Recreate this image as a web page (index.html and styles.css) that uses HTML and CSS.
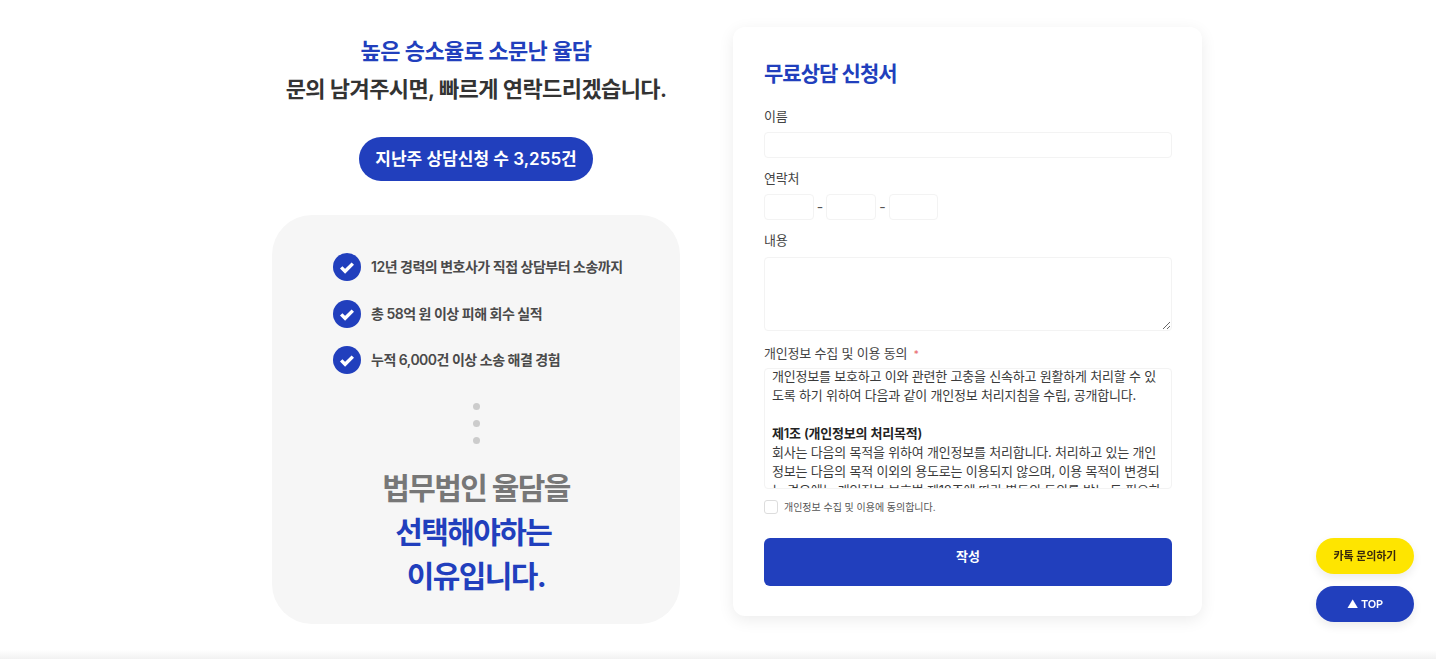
FILE: index.html
```html
<!DOCTYPE html>
<html lang="ko">
<head>
  <meta charset="UTF-8" />
  <meta name="viewport" content="width=device-width, initial-scale=1.0"/>
  <title>무료상담 신청서</title>
  <link rel="stylesheet" href="styles.css">
</head>
<body>
  <div class="container">
    <div class="intro">
      <h2 class="intro-title">높은 승소율로 소문난 율담</h2>
      <p class="intro-sub">문의 남겨주시면, 빠르게 연락드리겠습니다.</p>
      <div class="count-pill">지난주 상담신청 수 3,255건</div>

      <div class="reason-box">
        <ul class="check-list">
          <li>
            <svg class="check-icon" viewBox="0 0 28 28"><circle cx="14" cy="14" r="14" fill="#213fbd"/><path d="M8.2 14.4l3.9 3.9 7.7-7.7" fill="none" stroke="#fff" stroke-width="3.4"/></svg>
            <span>12년 경력의 변호사가 직접 상담부터 소송까지</span>
          </li>
          <li>
            <svg class="check-icon" viewBox="0 0 28 28"><circle cx="14" cy="14" r="14" fill="#213fbd"/><path d="M8.2 14.4l3.9 3.9 7.7-7.7" fill="none" stroke="#fff" stroke-width="3.4"/></svg>
            <span>총 58억 원 이상 피해 회수 실적</span>
          </li>
          <li>
            <svg class="check-icon" viewBox="0 0 28 28"><circle cx="14" cy="14" r="14" fill="#213fbd"/><path d="M8.2 14.4l3.9 3.9 7.7-7.7" fill="none" stroke="#fff" stroke-width="3.4"/></svg>
            <span>누적 6,000건 이상 소송 해결 경험</span>
          </li>
        </ul>
        <div class="dots"><i></i><i></i><i></i></div>
        <p class="reason-text">
          <span class="gray">법무법인 율담을</span><br>
          선택해야하는&nbsp;<br>
          이유입니다.
        </p>
      </div>
    </div>

    <form class="card">
      <h3 class="card-title">무료상담 신청서</h3>

      <label class="field-label">이름</label>
      <input type="text" class="input" />

      <label class="field-label">연락처</label>
      <div class="phone">
        <input type="text" class="input" />
        <span>-</span>
        <input type="text" class="input" />
        <span>-</span>
        <input type="text" class="input" />
      </div>

      <label class="field-label">내용</label>
      <textarea class="input memo"></textarea>

      <label class="field-label privacy-label">개인정보 수집 및 이용 동의 <em>*</em></label>
      <div class="privacy">
        <div class="privacy-inner">
          개인정보를 보호하고 이와 관련한 고충을 신속하고 원활하게 처리할 수 있<br>
          도록 하기 위하여 다음과 같이 개인정보 처리지침을 수립, 공개합니다.<br>
          <br>
          <strong>제1조 (개인정보의 처리목적)</strong><br>
          회사는 다음의 목적을 위하여 개인정보를 처리합니다. 처리하고 있는 개인<br>
          정보는 다음의 목적 이외의 용도로는 이용되지 않으며, 이용 목적이 변경되<br>
          는 경우에는 개인정보 보호법 제18조에 따라 별도의 동의를 받는 등 필요한
        </div>
      </div>

      <label class="agree">
        <input type="checkbox" />
        <span>개인정보 수집 및 이용에 동의합니다.</span>
      </label>

      <button type="button" class="submit">작성</button>
    </form>
  </div>

  <div class="floating">
    <a class="float-btn kakao">카톡 문의하기</a>
    <a class="float-btn top">▲ TOP</a>
  </div>
  <div class="page-edge"></div>
</body>
</html>
```

FILE: styles.css
```css
* {
  box-sizing: border-box;
}
html, body {
  height: 100%;
}
body {
  margin: 0;
  background: #fff;
  overflow: hidden;
  font-family: Inter, "Noto Sans CJK KR", "Noto Sans", sans-serif;
  color: #333;
}
.container {
  display: flex;
  align-items: flex-start;
  gap: 53px;
  width: 930px;
  margin-left: 272px;
  padding-top: 27px;
}

/* left column */
.intro {
  width: 408px;
  text-align: center;
}
.intro-title {
  margin: 8px 0 0;
  font-size: 22px;
  line-height: 32px;
  font-weight: 600;
  color: #213fbd;
  letter-spacing: -0.6px;
}
.intro-sub {
  margin: 6px 0 0;
  font-size: 22px;
  line-height: 32px;
  font-weight: 600;
  color: #333;
  letter-spacing: -0.6px;
}
.count-pill {
  display: inline-block;
  margin-top: 32px;
  height: 44px;
  padding: 0 16px;
  border-radius: 22px;
  background: #213fbd;
  color: #fff;
  font-size: 17px;
  line-height: 44px;
  font-weight: 600;
}
.reason-box {
  margin-top: 34px;
  height: 409px;
  padding-top: 38px;
  background: #f6f6f6;
  border-radius: 40px;
}
.check-list {
  list-style: none;
  margin: 0;
  padding: 0 0 0 61px;
  text-align: left;
}
.check-list li {
  display: flex;
  align-items: center;
  gap: 10px;
  height: 28px;
  margin-bottom: 18.5px;
  font-size: 14px;
  font-weight: 600;
  color: #4a4a4a;
  letter-spacing: -0.5px;
}
.check-list span {
  padding-bottom: 2px;
}
.check-icon {
  width: 28px;
  height: 28px;
  flex: none;
}
.dots {
  display: flex;
  flex-direction: column;
  align-items: center;
  gap: 10px;
  margin-top: 29px;
}
.dots i {
  width: 7px;
  height: 7px;
  border-radius: 50%;
  background: #ccc;
}
.reason-text {
  margin: 22px 0 0;
  font-size: 30px;
  line-height: 44px;
  font-weight: 700;
  color: #213fbd;
  letter-spacing: -1.6px;
}
.reason-text .gray {
  color: #777;
}

/* form card */
.card {
  width: 469px;
  height: 589px;
  padding: 30px 30px 30px 31px;
  background: #fff;
  border-radius: 12px;
  box-shadow: 0 4px 16px rgba(0,0,0,0.08);
}
.card-title {
  margin: 0 0 15.5px;
  font-size: 21px;
  line-height: 34px;
  font-weight: 600;
  color: #213fbd;
  letter-spacing: -1px;
}
.field-label {
  display: block;
  height: 25.5px;
  font-size: 13px;
  line-height: 18px;
  color: #444;
  letter-spacing: -0.2px;
}
.input {
  display: block;
  width: 100%;
  height: 26px;
  margin-bottom: 11px;
  padding: 4px 8px;
  border: 1px solid #f3f3f3;
  border-radius: 4px;
  background: #fff;
  font: inherit;
}
.phone {
  display: flex;
  align-items: flex-start;
  gap: 3.25px;
  margin-top: -0.5px;
  font-size: 14px;
  line-height: 26px;
  color: #555;
}
.phone .input {
  width: 49.5px;
}
.memo {
  height: 74.5px;
  margin-bottom: 12.5px;
  resize: vertical;
}
.privacy-label em {
  margin-left: 3px;
  font-style: normal;
  color: #e8696c;
  font-size: 10px;
}
.privacy-label {
  height: 24px;
}
.privacy {
  height: 121px;
  overflow: hidden;
  border: 1px solid #f3f3f3;
  border-radius: 4px;
  padding: 0 7px;
  font-size: 13px;
  line-height: 19px;
  color: #3a3a3a;
  letter-spacing: -0.2px;
  white-space: nowrap;
}
.privacy-inner {
  margin-top: -2px;
}
.privacy strong {
  font-weight: 600;
  color: #222;
}
.agree {
  display: flex;
  align-items: center;
  gap: 6px;
  height: 18px;
  margin-top: 9px;
  font-size: 10px;
  letter-spacing: -0.03px;
  color: #555;
}
.agree input {
  width: 14px;
  height: 14px;
  margin: 0;
  appearance: none;
  border: 1px solid #ddd;
  border-radius: 3px;
  background: #fff;
}
.submit {
  display: block;
  width: 100%;
  height: 48px;
  margin-top: 22px;
  padding: 0 0 12px;
  border: none;
  border-radius: 6px;
  background: #213fbd;
  color: #fff;
  font-family: inherit;
  font-size: 13px;
  font-weight: 600;
}

/* floating buttons */
.floating {
  position: fixed;
  left: 1316px;
  top: 538px;
  display: flex;
  flex-direction: column;
  gap: 12px;
}
.float-btn {
  display: block;
  width: 98px;
  height: 36px;
  border-radius: 18px;
  text-align: center;
  font-size: 11px;
  line-height: 36px;
  font-weight: 600;
  letter-spacing: -0.1px;
  box-shadow: 0 4px 10px rgba(0,0,0,0.08);
}
.kakao {
  background: #fee500;
  color: #3a2a0c;
}
.top {
  background: #213fbd;
  color: #fff;
}
.page-edge {
  position: fixed;
  left: 0;
  right: 0;
  bottom: 0;
  height: 9px;
  background: linear-gradient(to bottom, #fff, #f2f2f2);
}
```
